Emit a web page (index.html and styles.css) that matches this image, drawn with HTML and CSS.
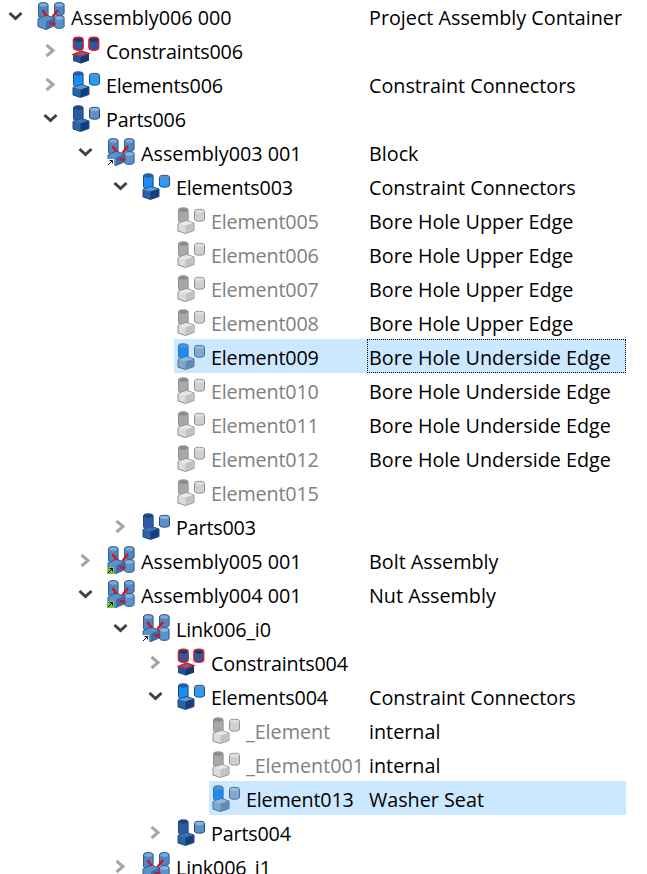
FILE: index.html
```html
<!DOCTYPE html>
<html lang="en">
<head>
<meta charset="utf-8">
<title>Assembly tree</title>
<link rel="stylesheet" href="styles.css">
</head>
<body>
<svg class="defs" aria-hidden="true">
  <defs>
    <symbol id="chev-right" viewBox="0 0 31 34"><path d="M11.5 12 L18 17.5 L11.5 23" fill="none" stroke="currentColor" stroke-width="3"/></symbol>
    <symbol id="chev-down" viewBox="0 0 31 34"><path d="M9.5 14 L15.5 19.5 L21.5 14" fill="none" stroke="currentColor" stroke-width="3"/></symbol>
    <symbol id="group" viewBox="0 0 28 28">
      <path d="M1.5 4 a4.8 2.2 0 0 1 9.6 0 V14.5 a4.8 2.2 0 0 1 -9.6 0 Z" style="fill:var(--a);stroke:var(--line)" stroke-width="1"/>
      <ellipse cx="6.3" cy="4" rx="4.2" ry="1.7" style="fill:var(--at)"/>
      <path d="M17.5 5.5 a5 2.2 0 0 1 10 0 V13 a5 2.2 0 0 1 -10 0 Z" style="fill:var(--b);stroke:var(--line)" stroke-width="1"/>
      <ellipse cx="22.5" cy="5.5" rx="4.4" ry="1.7" style="fill:var(--bt)"/>
      <path d="M1 17.5 L9.5 14.5 L17 17 V24.5 L8.5 27.5 L1 25 Z" style="fill:var(--c);stroke:var(--line)" stroke-width="1"/>
      <path d="M1.5 17.5 L9.5 15 L16.5 17 L8.5 19.5 Z" style="fill:var(--ct)"/>
      <path d="M8.5 19.5 L16.5 17 V24.2 L8.5 27 Z" style="fill:var(--cs)"/>
    </symbol>
    <symbol id="constraints" viewBox="0 0 28 28">
      <path d="M1.5 4 a4.8 2.6 0 0 1 9.6 0 V11.5 a4.8 2.6 0 0 1 -9.6 0 Z" fill="#2a5a9c" stroke="#d01f2d" stroke-width="1.6"/>
      <ellipse cx="6.3" cy="4" rx="4" ry="1.7" fill="#17386b"/>
      <path d="M17 4 a4.8 2.6 0 0 1 9.6 0 V11.5 a4.8 2.6 0 0 1 -9.6 0 Z" fill="#2a5a9c" stroke="#d01f2d" stroke-width="1.6"/>
      <ellipse cx="21.8" cy="4" rx="4" ry="1.7" fill="#17386b"/>
      <path d="M1 18.5 L9.5 15 L17 17.5 V24.5 L8.5 27.5 L1 25 Z" fill="#1f5596"/>
      <path d="M8.5 20.5 L17 17.5 V24.5 L8.5 27.5 Z" fill="#12386f"/>
      <path d="M1.5 18.5 L9.5 15 L16.5 17.5 L8.5 20.5 Z" fill="#4678b4" stroke="#d01f2d" stroke-width="1.6"/>
    </symbol>
    <symbol id="assembly" viewBox="0 0 28 28">
      <path d="M1.5 3 a4.8 2.4 0 0 1 9.6 0 V14 a4.8 2.4 0 0 1 -9.6 0 Z" fill="#4f86c0" stroke="#2f5d8f"/>
      <ellipse cx="6.3" cy="3" rx="4" ry="1.7" fill="#7fa9d4"/>
      <path d="M17.5 3 a4.8 2.4 0 0 1 9.6 0 V11 a4.8 2.4 0 0 1 -9.6 0 Z" fill="#4f86c0" stroke="#2f5d8f"/>
      <ellipse cx="22.3" cy="3" rx="4" ry="1.7" fill="#7fa9d4"/>
      <path d="M1 17 L9 13 L17 16 V24 L9 27.5 L1 24.5 Z" fill="#5a92cb" stroke="#2f5d8f"/>
      <path d="M9 19.5 L17 16 V24 L9 27.5 Z" fill="#3a6ea8"/>
      <path d="M17.5 16 a4.8 2.4 0 0 1 9.6 0 V24 a4.8 2.4 0 0 1 -9.6 0 Z" fill="#5a92cb" stroke="#2f5d8f"/>
      <ellipse cx="22.3" cy="16" rx="4" ry="1.7" fill="#8fb3d9"/>
      <path d="M5.5 8 L9.5 14 M21 8 L15.5 15 M12.5 21 L18.5 22" fill="none" stroke="#d3141f" stroke-width="2.4"/>
    </symbol>
    <symbol id="badge" viewBox="0 0 7 7">
      <rect x="0" y="0" width="7" height="7" style="fill:var(--badge)"/>
      <path d="M1 6 L5 2 M2.5 1.5 H5.5 V4.5" fill="none" stroke="#111" stroke-width="1"/>
    </symbol>
  </defs>
</svg>

<main class="tree">
  <div class="row d0">
    <div class="name"><svg class="chev open"><use href="#chev-down"/></svg><div class="item"><svg class="icon"><use href="#assembly"/></svg><span class="label wide">Assembly006 000</span></div></div>
    <div class="desc">Project Assembly Container</div>
  </div>
  <div class="row d1">
    <div class="name"><svg class="chev"><use href="#chev-right"/></svg><div class="item"><svg class="icon"><use href="#constraints"/></svg><span class="label">Constraints006</span></div></div>
    <div class="desc"></div>
  </div>
  <div class="row d1">
    <div class="name"><svg class="chev"><use href="#chev-right"/></svg><div class="item"><svg class="icon elements"><use href="#group"/></svg><span class="label">Elements006</span></div></div>
    <div class="desc">Constraint Connectors</div>
  </div>
  <div class="row d1">
    <div class="name"><svg class="chev open"><use href="#chev-down"/></svg><div class="item"><svg class="icon parts"><use href="#group"/></svg><span class="label">Parts006</span></div></div>
    <div class="desc"></div>
  </div>
  <div class="row d2">
    <div class="name"><svg class="chev open"><use href="#chev-down"/></svg><div class="item"><span class="icon-wrap"><svg class="icon"><use href="#assembly"/></svg><svg class="badge"><use href="#badge"/></svg></span><span class="label wide">Assembly003 001</span></div></div>
    <div class="desc">Block</div>
  </div>
  <div class="row d3">
    <div class="name"><svg class="chev open"><use href="#chev-down"/></svg><div class="item"><svg class="icon elements"><use href="#group"/></svg><span class="label">Elements003</span></div></div>
    <div class="desc">Constraint Connectors</div>
  </div>
  <div class="row d4 muted">
    <div class="name"><span class="chev"></span><div class="item"><svg class="icon gray"><use href="#group"/></svg><span class="label">Element005</span></div></div>
    <div class="desc">Bore Hole Upper Edge</div>
  </div>
  <div class="row d4 muted">
    <div class="name"><span class="chev"></span><div class="item"><svg class="icon gray"><use href="#group"/></svg><span class="label">Element006</span></div></div>
    <div class="desc">Bore Hole Upper Edge</div>
  </div>
  <div class="row d4 muted">
    <div class="name"><span class="chev"></span><div class="item"><svg class="icon gray"><use href="#group"/></svg><span class="label">Element007</span></div></div>
    <div class="desc">Bore Hole Upper Edge</div>
  </div>
  <div class="row d4 muted">
    <div class="name"><span class="chev"></span><div class="item"><svg class="icon gray"><use href="#group"/></svg><span class="label">Element008</span></div></div>
    <div class="desc">Bore Hole Upper Edge</div>
  </div>
  <div class="row d4 selected focused">
    <div class="name"><span class="chev"></span><div class="item"><svg class="icon picked"><use href="#group"/></svg><span class="label">Element009</span></div></div>
    <div class="desc">Bore Hole Underside Edge</div>
  </div>
  <div class="row d4 muted">
    <div class="name"><span class="chev"></span><div class="item"><svg class="icon gray"><use href="#group"/></svg><span class="label">Element010</span></div></div>
    <div class="desc">Bore Hole Underside Edge</div>
  </div>
  <div class="row d4 muted">
    <div class="name"><span class="chev"></span><div class="item"><svg class="icon gray"><use href="#group"/></svg><span class="label">Element011</span></div></div>
    <div class="desc">Bore Hole Underside Edge</div>
  </div>
  <div class="row d4 muted">
    <div class="name"><span class="chev"></span><div class="item"><svg class="icon gray"><use href="#group"/></svg><span class="label">Element012</span></div></div>
    <div class="desc">Bore Hole Underside Edge</div>
  </div>
  <div class="row d4 muted">
    <div class="name"><span class="chev"></span><div class="item"><svg class="icon gray"><use href="#group"/></svg><span class="label">Element015</span></div></div>
    <div class="desc"></div>
  </div>
  <div class="row d3">
    <div class="name"><svg class="chev"><use href="#chev-right"/></svg><div class="item"><svg class="icon parts"><use href="#group"/></svg><span class="label">Parts003</span></div></div>
    <div class="desc"></div>
  </div>
  <div class="row d2">
    <div class="name"><svg class="chev"><use href="#chev-right"/></svg><div class="item"><span class="icon-wrap"><svg class="icon"><use href="#assembly"/></svg><svg class="badge green"><use href="#badge"/></svg></span><span class="label wide">Assembly005 001</span></div></div>
    <div class="desc">Bolt Assembly</div>
  </div>
  <div class="row d2">
    <div class="name"><svg class="chev open"><use href="#chev-down"/></svg><div class="item"><span class="icon-wrap"><svg class="icon"><use href="#assembly"/></svg><svg class="badge green"><use href="#badge"/></svg></span><span class="label wide">Assembly004 001</span></div></div>
    <div class="desc">Nut Assembly</div>
  </div>
  <div class="row d3">
    <div class="name"><svg class="chev open"><use href="#chev-down"/></svg><div class="item"><span class="icon-wrap"><svg class="icon"><use href="#assembly"/></svg><svg class="badge"><use href="#badge"/></svg></span><span class="label">Link006_i0</span></div></div>
    <div class="desc"></div>
  </div>
  <div class="row d4">
    <div class="name"><svg class="chev"><use href="#chev-right"/></svg><div class="item"><svg class="icon"><use href="#constraints"/></svg><span class="label">Constraints004</span></div></div>
    <div class="desc"></div>
  </div>
  <div class="row d4">
    <div class="name"><svg class="chev open"><use href="#chev-down"/></svg><div class="item"><svg class="icon elements"><use href="#group"/></svg><span class="label">Elements004</span></div></div>
    <div class="desc">Constraint Connectors</div>
  </div>
  <div class="row d5 muted">
    <div class="name"><span class="chev"></span><div class="item"><svg class="icon gray"><use href="#group"/></svg><span class="label wide">_Element</span></div></div>
    <div class="desc">internal</div>
  </div>
  <div class="row d5 muted">
    <div class="name"><span class="chev"></span><div class="item"><svg class="icon gray"><use href="#group"/></svg><span class="label wide">_Element001</span></div></div>
    <div class="desc">internal</div>
  </div>
  <div class="row d5 selected">
    <div class="name"><span class="chev"></span><div class="item"><svg class="icon picked"><use href="#group"/></svg><span class="label">Element013</span></div></div>
    <div class="desc">Washer Seat</div>
  </div>
  <div class="row d4">
    <div class="name"><svg class="chev"><use href="#chev-right"/></svg><div class="item"><svg class="icon parts"><use href="#group"/></svg><span class="label">Parts004</span></div></div>
    <div class="desc"></div>
  </div>
  <div class="row d3">
    <div class="name"><svg class="chev"><use href="#chev-right"/></svg><div class="item"><svg class="icon"><use href="#assembly"/></svg><span class="label">Link006_i1</span></div></div>
    <div class="desc"></div>
  </div>
</main>
</body>
</html>
```

FILE: styles.css
```css
html, body {
  margin: 0;
  height: 100%;
  overflow: hidden;
  background: #fff;
}

.defs {
  display: none;
}

.tree {
  width: 626px;
  margin-top: -1px;
  font-family: "Open Sans", "Noto Sans", sans-serif;
  font-size: 19.75px;
  color: #000;
}

.row {
  display: flex;
  height: 34px;
  line-height: 38px;
  white-space: nowrap;
}

.name {
  display: flex;
  align-items: stretch;
  width: 367px;
  flex: none;
  box-sizing: border-box;
}

.d1 .name { padding-left: 35px; }
.d2 .name { padding-left: 70px; }
.d3 .name { padding-left: 105px; }
.d4 .name { padding-left: 140px; }
.d5 .name { padding-left: 175px; }

.chev {
  display: block;
  flex: none;
  width: 31px;
  height: 34px;
  margin-right: 3px;
  color: #a6a6a6;
}

.chev.open {
  color: #404040;
}

.item {
  display: flex;
  align-items: center;
  flex: 1;
  min-width: 0;
  height: 34px;
  padding-left: 3px;
  gap: 6px;
}

.label {
  align-self: flex-start;
  height: 34px;
  letter-spacing: -0.18px;
}

.label.wide {
  letter-spacing: 0;
}

.icon {
  display: block;
  flex: none;
  width: 28px;
  height: 28px;
  --line: #1d4a83;
}

.icon-wrap {
  position: relative;
  flex: none;
  width: 28px;
  height: 28px;
}

.badge {
  position: absolute;
  left: 0;
  bottom: 0;
  width: 7px;
  height: 7px;
  --badge: #fff;
}

.badge.green {
  --badge: #7ac143;
}

.parts {
  --a: #2b5c9e; --at: #1b4480;
  --b: #5f90c4; --bt: #8fb3d9;
  --c: #2a63a8; --ct: #3f73b0; --cs: #143e78;
}

.elements {
  --a: #1c8cf5; --at: #2a5a9c;
  --b: #2a9bf5; --bt: #5f90c4;
  --c: #2a63a8; --ct: #5b9ad6; --cs: #143e78;
}

.gray {
  --line: #8f8f8f;
  --a: #a8a8a8; --at: #8a8a8a;
  --b: #cfcfcf; --bt: #dedede;
  --c: #dcdcdc; --ct: #e8e8e8; --cs: #c2c2c2;
}

.picked {
  --line: #43709e;
  --a: #1c8cf5; --at: #5f8fbe;
  --b: #7fa8cc; --bt: #98b9d6;
  --c: #7fa8cc; --ct: #98b9d6; --cs: #5f8bb5;
}

.muted .label {
  color: #808080;
}

.selected .item,
.selected .desc {
  background: #cce8ff;
}

.desc {
  width: 259px;
  height: 34px;
  flex: none;
  box-sizing: border-box;
  padding-left: 2px;
}

.focused .desc {
  outline: 1px dotted #000;
  outline-offset: -1px;
}
```
